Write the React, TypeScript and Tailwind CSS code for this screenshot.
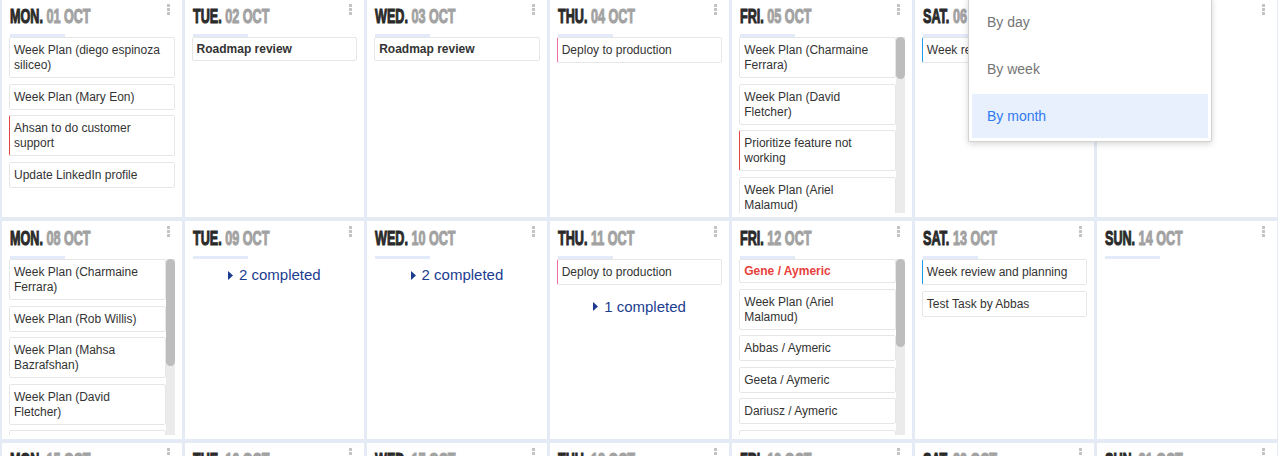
import React from "react";

/**
 * Month planner — three week rows of day cells with task cards,
 * "n completed" toggles and the open view-switch menu.
 */
type Accent = "red" | "pink" | "blue";

type Task = {
  text: string;
  accent?: Accent;
  title?: boolean; // bold, tighter card
  alert?: boolean; // red title text
};

type Day = {
  day: string;
  date: string;
  tasks?: Task[];
  completed?: number;
  thumb?: number; // scrollbar thumb height, px
};

const ACCENT: Record<Accent, string> = {
  red: "border-l-[#e0443e]",
  pink: "border-l-[#ee6aa4]",
  blue: "border-l-[#1e9be9]",
};

const wp = (name: string): Task => ({ text: `Week Plan (${name})` });

const WEEKS: Day[][] = [
  [
    {
      day: "MON.",
      date: "01 OCT",
      tasks: [
        wp("diego espinoza siliceo"),
        wp("Mary Eon"),
        { text: "Ahsan to do customer support", accent: "red" },
        { text: "Update LinkedIn profile" },
      ],
    },
    { day: "TUE.", date: "02 OCT", tasks: [{ text: "Roadmap review", title: true }] },
    { day: "WED.", date: "03 OCT", tasks: [{ text: "Roadmap review", title: true }] },
    { day: "THU.", date: "04 OCT", tasks: [{ text: "Deploy to production", accent: "pink" }] },
    {
      day: "FRI.",
      date: "05 OCT",
      thumb: 42,
      tasks: [
        wp("Charmaine Ferrara"),
        wp("David Fletcher"),
        { text: "Prioritize feature not working", accent: "red" },
        wp("Ariel Malamud"),
        wp("Rob Willis"),
      ],
    },
    { day: "SAT.", date: "06 OCT", tasks: [{ text: "Week review and planning", accent: "blue" }] },
    { day: "SUN.", date: "07 OCT" },
  ],
  [
    {
      day: "MON.",
      date: "08 OCT",
      thumb: 107,
      tasks: [
        wp("Charmaine Ferrara"),
        wp("Rob Willis"),
        wp("Mahsa Bazrafshan"),
        wp("David Fletcher"),
        wp("Ariel Malamud"),
      ],
    },
    { day: "TUE.", date: "09 OCT", completed: 2 },
    { day: "WED.", date: "10 OCT", completed: 2 },
    {
      day: "THU.",
      date: "11 OCT",
      tasks: [{ text: "Deploy to production", accent: "pink" }],
      completed: 1,
    },
    {
      day: "FRI.",
      date: "12 OCT",
      thumb: 88,
      tasks: [
        { text: "Gene / Aymeric", title: true, alert: true },
        wp("Ariel Malamud"),
        { text: "Abbas / Aymeric" },
        { text: "Geeta / Aymeric" },
        { text: "Dariusz / Aymeric" },
        { text: "Lydia / Aymeric" },
      ],
    },
    {
      day: "SAT.",
      date: "13 OCT",
      tasks: [{ text: "Week review and planning", accent: "blue" }, { text: "Test Task by Abbas" }],
    },
    { day: "SUN.", date: "14 OCT" },
  ],
  [
    { day: "MON.", date: "15 OCT" },
    { day: "TUE.", date: "16 OCT" },
    { day: "WED.", date: "17 OCT" },
    { day: "THU.", date: "18 OCT" },
    { day: "FRI.", date: "19 OCT" },
    { day: "SAT.", date: "20 OCT" },
    { day: "SUN.", date: "21 OCT" },
  ],
];

function Kebab() {
  return (
    <div className="-mt-px flex flex-col gap-[1px]">
      <span className="h-[3px] w-[3px] bg-[#c4c4c4]" />
      <span className="h-[3px] w-[3px] bg-[#c4c4c4]" />
      <span className="h-[3px] w-[3px] bg-[#c4c4c4]" />
    </div>
  );
}

function TaskCard({ t }: { t: Task }) {
  return (
    <div
      className={`shrink-0 rounded-[2px] border border-[#e6e6e6] bg-white pl-[4px] pr-[5px] text-[12px] leading-[15px] ${
        t.title ? "pt-[4px] pb-[3px] font-bold" : "pt-[5px] pb-[4px]"
      } ${t.alert ? "text-[#e8413c]" : "text-[#333]"} ${t.accent ? ACCENT[t.accent] : ""}`}
    >
      {t.text}
    </div>
  );
}

function Completed({ n }: { n: number }) {
  return (
    <div className="flex items-center justify-center gap-[6px] pt-[7px] text-[15px] leading-[18px] text-[#1c3d8f]">
      <svg width="5" height="9" viewBox="0 0 5 9" className="fill-current">
        <path d="M0 0 L5 4.5 L0 9Z" />
      </svg>
      {n} completed
    </div>
  );
}

function DayCell({ d }: { d: Day }) {
  return (
    <div className="flex h-[218px] flex-col bg-white">
      <div className="flex h-[35px] shrink-0 items-start justify-between pl-[8px] pr-[12px] pt-[6px]">
        <div className="origin-left scale-x-[0.6] whitespace-nowrap text-[21px] font-bold leading-[21px] [-webkit-text-stroke:1.1px]">
          <span className="text-[#2a2a2a]">{d.day}</span>{" "}
          <span className="text-[#a2a2a2]">{d.date}</span>
        </div>
        <Kebab />
      </div>
      <div className="ml-[8px] h-[3px] w-[55px] shrink-0 bg-[#e3ebfa]" />
      <div className="mx-[7px] flex min-h-0 flex-1 pb-[4px]">
        <div className="flex min-w-0 flex-1 flex-col gap-[5.5px] overflow-hidden">
          {d.tasks?.map((t, i) => <TaskCard key={i} t={t} />)}
          {d.completed ? <Completed n={d.completed} /> : null}
        </div>
        {d.thumb ? (
          <div className="w-[9px] shrink-0 bg-[#ebebeb]">
            <div className="w-full rounded-full bg-[#bdbdbd]" style={{ height: d.thumb }} />
          </div>
        ) : null}
      </div>
    </div>
  );
}

function ViewMenu() {
  const items = ["By day", "By week", "By month"];
  return (
    <div className="absolute left-[968px] top-[-4px] flex w-[244px] flex-col gap-[3px] rounded-[2px] border border-[#d2d2d2] bg-white p-[3px] shadow-[0_2px_6px_rgba(0,0,0,0.16)]">
      {items.map((label) => {
        const active = label === "By month";
        return (
          <div
            key={label}
            className={`flex h-[44px] items-center px-[15px] text-[14px] ${
              active ? "bg-[#e8f0fe] text-[#2f7af2]" : "text-[#757575]"
            }`}
          >
            {label}
          </div>
        );
      })}
    </div>
  );
}

export default function App() {
  return (
    <div className="relative h-[456px] w-[1278px] overflow-hidden bg-[#e5ebf5] font-['Liberation_Sans',Arial,sans-serif]">
      <div className="-mt-px grid grid-cols-7 gap-x-[3px] gap-y-[4px] pl-[2px] pr-[1px]">
        {WEEKS.flat().map((d) => (
          <DayCell key={d.date} d={d} />
        ))}
      </div>
      <ViewMenu />
    </div>
  );
}
